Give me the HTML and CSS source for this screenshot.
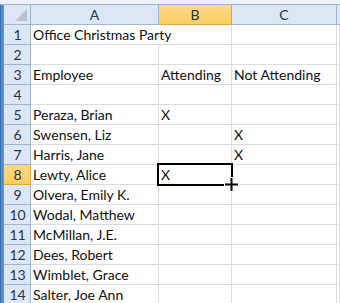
FILE: index.html
```html
<!DOCTYPE html>
<html lang="en">
<head>
    <meta charset="UTF-8">
    <title>Office Christmas Party</title>
    <link rel="stylesheet" href="styles.css">
</head>
<body>
    <div class="window">
        <div class="frame-top"></div>
        <div class="main">
            <div class="frame-left"></div>
            <div class="sheet">
                <!-- header row -->
                <div class="corner"><span class="corner-mark"></span></div>
                <div class="col-head">A</div>
                <div class="col-head active">B</div>
                <div class="col-head">C</div>
                <div class="col-head last"></div>

                <div class="row-head">1</div><div class="cell spill">Office Christmas Party</div><div class="cell"></div><div class="cell"></div><div class="cell"></div>
                <div class="row-head">2</div><div class="cell"></div><div class="cell"></div><div class="cell"></div><div class="cell"></div>
                <div class="row-head">3</div><div class="cell">Employee</div><div class="cell">Attending</div><div class="cell">Not Attending</div><div class="cell"></div>
                <div class="row-head">4</div><div class="cell"></div><div class="cell"></div><div class="cell"></div><div class="cell"></div>
                <div class="row-head">5</div><div class="cell">Peraza, Brian</div><div class="cell">X</div><div class="cell"></div><div class="cell"></div>
                <div class="row-head">6</div><div class="cell">Swensen, Liz</div><div class="cell"></div><div class="cell">X</div><div class="cell"></div>
                <div class="row-head">7</div><div class="cell">Harris, Jane</div><div class="cell"></div><div class="cell">X</div><div class="cell"></div>
                <div class="row-head active">8</div><div class="cell">Lewty, Alice</div><div class="cell">X</div><div class="cell"></div><div class="cell"></div>
                <div class="row-head">9</div><div class="cell">Olvera, Emily K.</div><div class="cell"></div><div class="cell"></div><div class="cell"></div>
                <div class="row-head">10</div><div class="cell">Wodal, Matthew</div><div class="cell"></div><div class="cell"></div><div class="cell"></div>
                <div class="row-head">11</div><div class="cell">McMillan, J.E.</div><div class="cell"></div><div class="cell"></div><div class="cell"></div>
                <div class="row-head">12</div><div class="cell">Dees, Robert</div><div class="cell"></div><div class="cell"></div><div class="cell"></div>
                <div class="row-head">13</div><div class="cell">Wimblet, Grace</div><div class="cell"></div><div class="cell"></div><div class="cell"></div>
                <div class="row-head">14</div><div class="cell">Salter, Joe Ann</div><div class="cell"></div><div class="cell"></div><div class="cell"></div>

                <!-- selection B8 + fill cursor -->
                <div class="selection"></div>
                <svg class="fill-cursor" width="15" height="15" viewBox="0 0 15 15">
                    <path d="M6 0h3v6h6v3H9v6H6V9H0V6h6z" fill="#fff"/>
                    <path d="M6.5 1h2v5.5H14v2H8.5V14h-2V8.5H1v-2h5.5z" fill="#000"/>
                </svg>
            </div>
        </div>
    </div>
</body>
</html>
```

FILE: styles.css
```css
* {
    margin: 0;
    padding: 0;
    box-sizing: border-box;
}

body {
    width: 340px;
    height: 303px;
    overflow: hidden;
    background-color: #fff;
    font-family: Lato, "Open Sans", sans-serif;
    font-size: 14px;
    color: #111;
}

.window {
    display: flex;
    flex-direction: column;
    height: 100%;
}

.frame-top {
    height: 5px;
    background-color: #edf1f7;
    border-bottom: 1px solid #9eb6ce;
}

.main {
    flex: 1;
    display: flex;
    min-height: 0;
}

.frame-left {
    width: 6px;
    background: linear-gradient(to right, #2b5f98, #5d92cc 40%, #4a80bd 80%, #9eb6ce);
}

.sheet {
    position: relative;
    flex: 1;
    display: grid;
    grid-template-columns: 27px 128px 73px 105px 1fr;
    grid-auto-rows: 20px;
    align-content: start;
}

.corner,
.col-head,
.row-head {
    background-color: #dce6f4;
    border-right: 1px solid #9eb6ce;
    border-bottom: 1px solid #9eb6ce;
    color: #27344a;
    display: flex;
    align-items: center;
    justify-content: center;
}

.corner {
    position: relative;
}

.corner-mark {
    position: absolute;
    right: 3px;
    bottom: 3px;
    width: 0;
    height: 0;
    border-left: 12px solid transparent;
    border-bottom: 12px solid #b7c3d3;
}

.col-head.active,
.row-head.active {
    background: linear-gradient(#fbd98a, #f8cd5f);
    border-color: #e3a44a;
}

.col-head.last {
    border-right: none;
}

.row-head {
    padding-left: 1px;
}

.cell {
    border-right: 1px solid #dadcdd;
    border-bottom: 1px solid #dadcdd;
    padding-left: 2px;
    display: flex;
    align-items: center;
    white-space: nowrap;
}

.cell.spill {
    overflow: visible;
    border-right-color: transparent;
}

.selection {
    position: absolute;
    left: 153px;
    top: 158px;
    width: 76px;
    height: 23px;
    border: 2px solid #000;
}

.fill-cursor {
    position: absolute;
    left: 220px;
    top: 172px;
}
```
